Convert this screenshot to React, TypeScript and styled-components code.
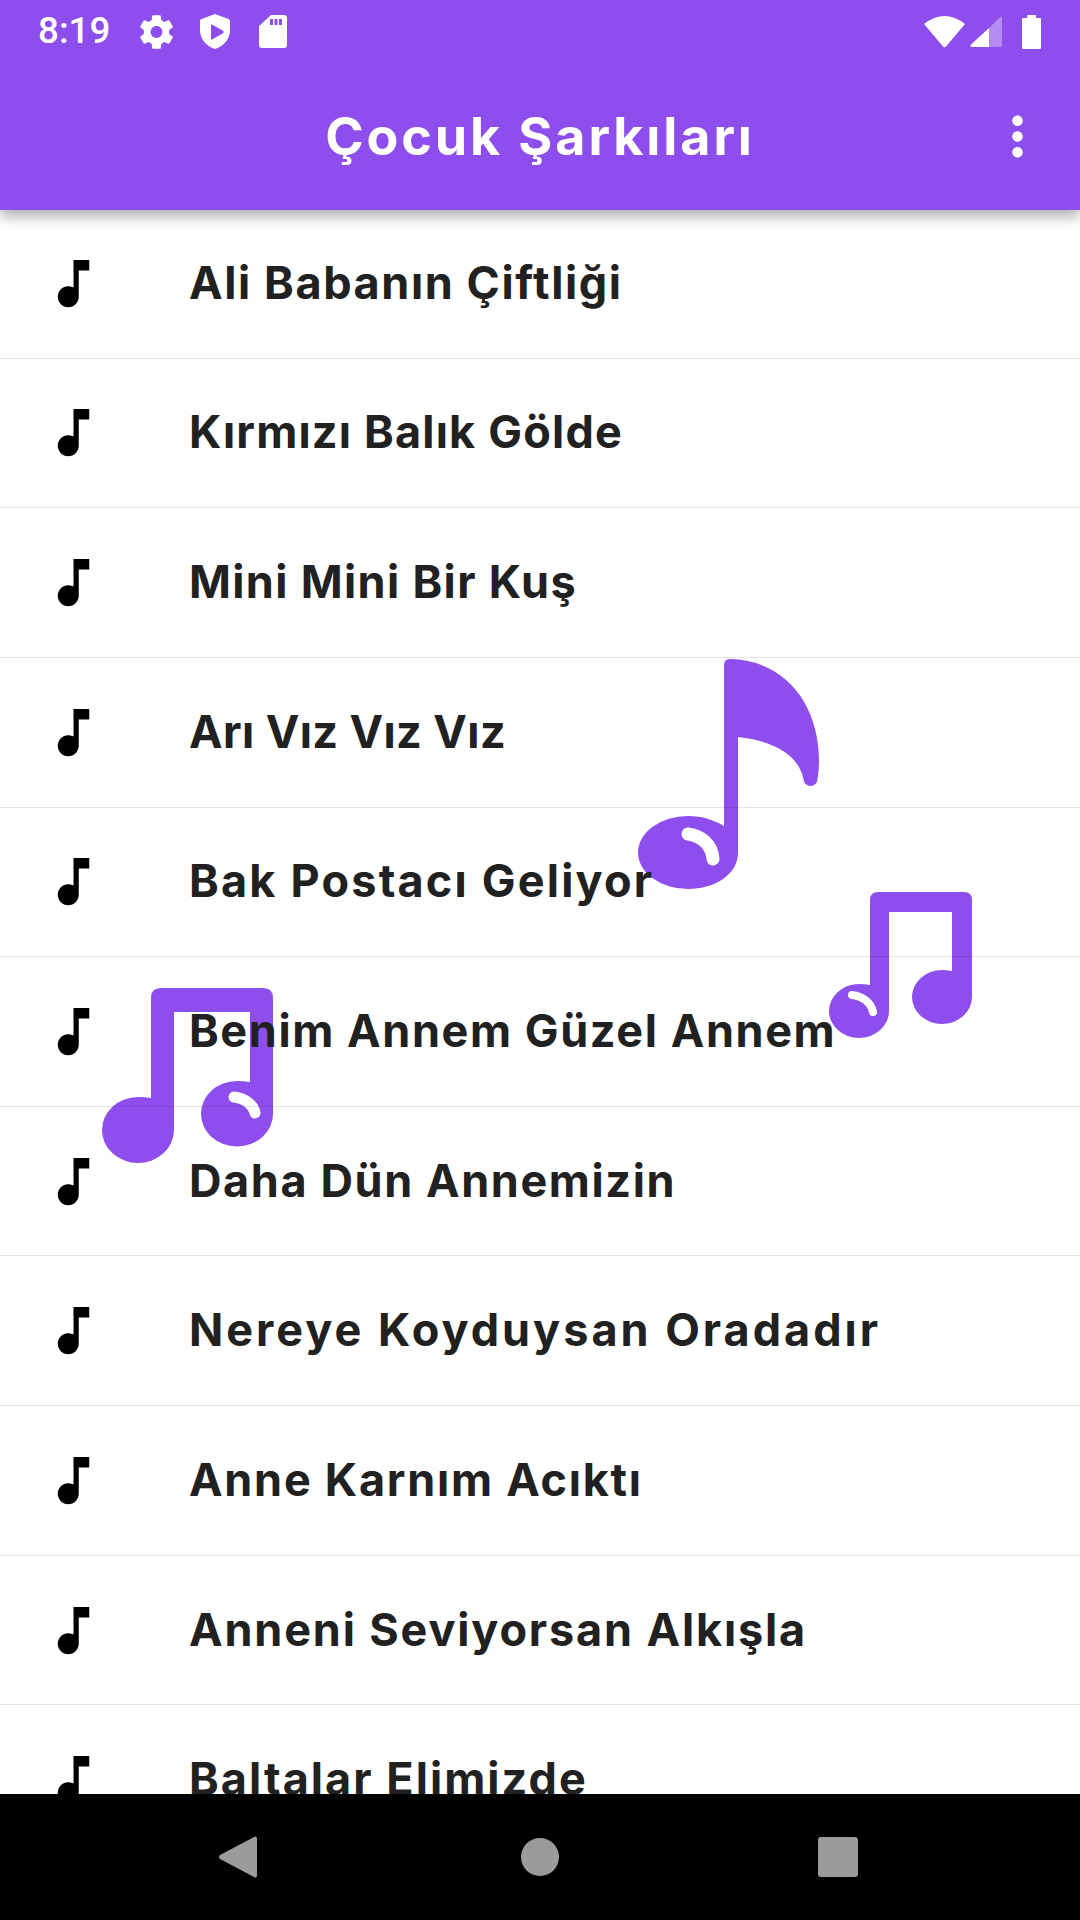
import React from 'react';
import styled, { createGlobalStyle } from 'styled-components';

const PURPLE = '#8e4eed';

const GlobalStyle = createGlobalStyle`
  html, body {
    margin: 0;
    padding: 0;
    background: #fff;
  }
`;

const Screen = styled.div`
  width: 1080px;
  height: 1920px;
  display: flex;
  flex-direction: column;
  overflow: hidden;
  font-family: Inter, 'Noto Sans', sans-serif;
`;

const Header = styled.header`
  position: relative;
  z-index: 2;
  height: 210px;
  flex: none;
  background: ${PURPLE};
  box-shadow: 0 7px 12px rgba(0, 0, 0, 0.3);
`;

const StatusBar = styled.div`
  height: 63px;
  display: flex;
  align-items: center;
  padding: 0 39px 0 38px;
  box-sizing: border-box;
  color: #fff;
`;

const Clock = styled.span`
  width: 70px;
  margin-right: 32px;
  font: 500 36.75px/1 Roboto, sans-serif;
  white-space: nowrap;
`;

const StatusIcon = styled.svg<{ $gap?: number }>`
  flex: none;
  display: block;
  margin-right: ${({ $gap }) => $gap ?? 0}px;
`;

const Spacer = styled.div`
  flex: 1;
`;

const Toolbar = styled.div`
  height: 147px;
  display: flex;
  align-items: center;
  justify-content: center;
  position: relative;
`;

const Title = styled.h1`
  margin: 0;
  color: #fff;
  font-size: 52px;
  font-weight: 700;
  letter-spacing: 2.9px;
  line-height: 1;
`;

const MoreButton = styled.svg`
  position: absolute;
  right: 31px;
  top: 42px;
  width: 63px;
  height: 63px;
  fill: #fff;
`;

const ListArea = styled.div`
  position: relative;
  flex: 1;
  overflow: hidden;
  background: #fff;
`;

const BigNote = styled.svg<{ $left: number; $top: number }>`
  position: absolute;
  left: ${({ $left }) => $left}px;
  top: ${({ $top }) => $top}px;
  fill: ${PURPLE};
`;

const Shine = styled.path`
  fill: none;
  stroke: #fff;
  stroke-linecap: round;
`;

const SongList = styled.ul`
  position: relative;
  list-style: none;
  margin: -1px 0 0;
  padding: 0;
`;

const SongRow = styled.li`
  height: 149.65px;
  box-sizing: border-box;
  display: flex;
  align-items: center;
  padding-left: 42px;
  border-bottom: 1px solid rgba(0, 0, 0, 0.11);
`;

const SongIcon = styled.svg`
  flex: none;
  width: 63px;
  height: 63px;
  fill: #000;
`;

const SongName = styled.span<{ $spacing: number }>`
  margin-left: 84px;
  padding-bottom: 2px;
  color: #212121;
  font-size: 45px;
  font-weight: 700;
  letter-spacing: ${({ $spacing }) => $spacing}px;
  line-height: 1;
  white-space: nowrap;
`;

const NavBar = styled.nav`
  position: relative;
  z-index: 2;
  height: 126px;
  flex: none;
  box-sizing: border-box;
  padding-left: 219px;
  background: #000;
  display: flex;
  align-items: center;
`;

const NavIcon = styled.svg<{ $gap?: number }>`
  display: block;
  flex: none;
  fill: #9b9b9b;
  margin-right: ${({ $gap }) => $gap ?? 0}px;
`;

// the original rounded font runs wider than Inter, spacing differs per title to keep the same line ends
const songs = [
  { name: 'Ali Babanın Çiftliği', spacing: 1.6 },
  { name: 'Kırmızı Balık Gölde', spacing: 1.2 },
  { name: 'Mini Mini Bir Kuş', spacing: 1.35 },
  { name: 'Arı Vız Vız Vız', spacing: 0.4 },
  { name: 'Bak Postacı Geliyor', spacing: 2.2 },
  { name: 'Benim Annem Güzel Annem', spacing: 1.6 },
  { name: 'Daha Dün Annemizin', spacing: 1.6 },
  { name: 'Nereye Koyduysan Oradadır', spacing: 3 },
  { name: 'Anne Karnım Acıktı', spacing: 1.75 },
  { name: 'Anneni Seviyorsan Alkışla', spacing: 1.85 },
  { name: 'Baltalar Elimizde', spacing: 2.05 },
];

const App = () => (
  <Screen>
    <GlobalStyle />
    <Header>
      <StatusBar>
        <Clock>8:19</Clock>
        <StatusIcon $gap={27} width={33} height={34} viewBox="2.2 2 19.6 20" fill="#fff">
          <path d="M19.43 12.98c.04-.32.07-.64.07-.98s-.03-.66-.07-.98l2.11-1.65c.19-.15.24-.42.12-.64l-2-3.46c-.12-.22-.39-.3-.61-.22l-2.49 1c-.52-.4-1.08-.73-1.69-.98l-.38-2.65C14.46 2.18 14.25 2 14 2h-4c-.25 0-.46.18-.49.42l-.38 2.65c-.61.25-1.17.59-1.69.98l-2.49-1c-.23-.09-.49 0-.61.22l-2 3.46c-.13.22-.07.49.12.64l2.11 1.65c-.04.32-.07.65-.07.98s.03.66.07.98l-2.11 1.65c-.19.15-.24.42-.12.64l2 3.46c.12.22.39.3.61.22l2.49-1c.52.4 1.08.73 1.69.98l.38 2.65c.03.24.24.42.49.42h4c.25 0 .46-.18.49-.42l.38-2.65c.61-.25 1.17-.59 1.69-.98l2.49 1c.23.09.49 0 .61-.22l2-3.46c.12-.22.07-.49-.12-.64l-2.11-1.65zM12 15.5c-1.93 0-3.5-1.57-3.5-3.5s1.57-3.5 3.5-3.5 3.5 1.57 3.5 3.5-1.57 3.5-3.5 3.5z" />
        </StatusIcon>
        <StatusIcon $gap={29} width={30} height={35} viewBox="0 0 30 35" fill="#fff">
          <path
            fillRule="evenodd"
            d="M15 0 L28.5 5 Q30 5.600 30 7 V16 C30 25 24 32 15 35 C6 32 0 25 0 16 V7 Q0 5.600 1.500 5 Z M11 11.500 V24.500 Q11 26 12.500 25.200 L23 19.200 Q24.500 18 23 16.800 L12.500 10.800 Q11 10 11 11.500 Z"
          />
        </StatusIcon>
        <StatusIcon width={28} height={33} viewBox="0 0 28 33" fill="#fff">
          <path
            fillRule="evenodd"
            d="M12 0 H25 Q28 0 28 3 V30 Q28 33 25 33 H3 Q0 33 0 30 V11 Z M11 4 V10 H14 V4 Z M15.500 4 V10 H18.500 V4 Z M20 4 V10 H23 V4 Z"
          />
        </StatusIcon>
        <Spacer />
        <StatusIcon $gap={5} width={41} height={32} viewBox="0 0 41 32" fill="#fff">
          <path d="M0 8 Q20.500 -8 41 8 L22 30.500 Q20.500 32 19 30.500 Z" />
        </StatusIcon>
        <StatusIcon $gap={20} width={32} height={31} viewBox="0 0 32 31" fill="#fff">
          <path d="M19 12 L0.500 29 Q0 31 1.500 31 H19 Z" />
          <path opacity="0.35" d="M19 12 L31 0.500 Q32 0 32 1.500 V29.500 Q32 31 30.500 31 H19 Z" />
        </StatusIcon>
        <StatusIcon width={19} height={34} viewBox="0 0 19 34" fill="#fff">
          <path d="M5 3 V1 Q5 0 6 0 H13 Q14 0 14 1 V3 H18 Q19 3 19 4 V33 Q19 34 18 34 H1 Q0 34 0 33 V4 Q0 3 1 3 Z" />
        </StatusIcon>
      </StatusBar>
      <Toolbar>
        <Title>Çocuk Şarkıları</Title>
        <MoreButton viewBox="0 0 24 24">
          <path d="M12 8c1.100 0 2-.9 2-2s-.9-2-2-2-2 .9-2 2 .9 2 2 2zm0 2c-1.100 0-2 .9-2 2s.9 2 2 2 2-.9 2-2-.9-2-2-2zm0 6c-1.100 0-2 .9-2 2s.9 2 2 2 2-.9 2-2-.9-2-2-2z" />
        </MoreButton>
      </Toolbar>
    </Header>
    <ListArea>
      <BigNote $left={638} $top={449} width={181} height={231} viewBox="0 0 181 231">
        <path d="M86 6 Q86 0 92 0 C146 1 181 44 181 102 Q181 112 179.500 120 A7 7 0 0 1 165.500 120 C160 95 135 82 100 78 V194 C100 215 77 230 50 230 A50 36.500 0 0 1 50 157 C64 157 76 161 86 167 Z" />
        <Shine strokeWidth={13} d="M50 175 C64 177 74 186 75 200" />
      </BigNote>
      <BigNote $left={829} $top={682} width={143} height={146} viewBox="0 0 143 146">
        <path d="M41 8 Q41 0 49 0 H135 Q143 0 143 8 V105 A30 27 0 0 1 83 105 A30 27 0 0 1 113 78 Q118 78 123 79 V20 H60 V119 A30 27 0 0 1 0 119 A30 27 0 0 1 30 92 Q36 92 41 93 Z" />
        <Shine strokeWidth={8} d="M23 103 C33 104 42 110 44 120" />
      </BigNote>
      <BigNote $left={102} $top={778} width={171} height={175} viewBox="0 0 171 175">
        <path d="M49 10 Q49 0 59 0 H161 Q171 0 171 10 V126 A36 32.500 0 0 1 99 126 A36 32.500 0 0 1 135 93 Q142 93 148 94 V24 H72 V142 A36 33 0 0 1 0 142 A36 33 0 0 1 36 109 Q43 109 49 110 Z" />
        <Shine strokeWidth={11} d="M132 109 C142 110 151 116 153 125" />
      </BigNote>
      <SongList>
        {songs.map((song) => (
          <SongRow key={song.name}>
            <SongIcon viewBox="0 0 24 24">
              <path d="M12 3v10.550c-.59-.34-1.270-.55-2-.55-2.210 0-4 1.790-4 4s1.790 4 4 4 4-1.790 4-4V7h4V3h-6z" />
            </SongIcon>
            <SongName $spacing={song.spacing}>{song.name}</SongName>
          </SongRow>
        ))}
      </SongList>
    </ListArea>
    <NavBar>
      <NavIcon $gap={264} width={38} height={42} viewBox="0 0 38 42">
        <path d="M36 0.500 Q38 0 38 3 V39 Q38 42 36 41.500 L1 23 Q-1 21 1 19 Z" />
      </NavIcon>
      <NavIcon $gap={259} width={38} height={38} viewBox="0 0 38 38">
        <circle cx="19" cy="19" r="19" />
      </NavIcon>
      <NavIcon width={40} height={40} viewBox="0 0 40 40">
        <rect width="40" height="40" rx="3" />
      </NavIcon>
    </NavBar>
  </Screen>
);

export default App;
